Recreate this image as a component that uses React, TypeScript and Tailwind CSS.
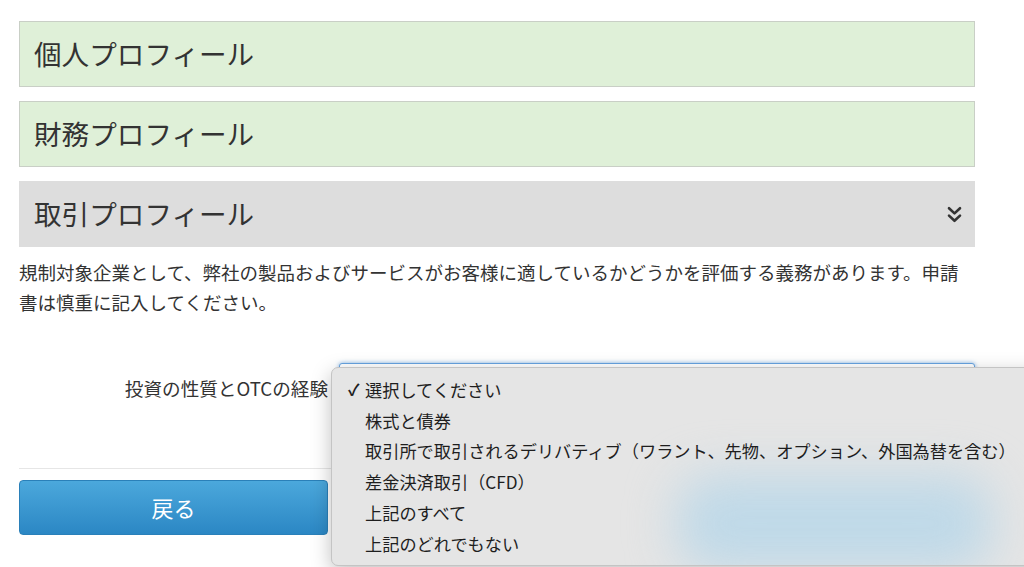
import React from "react";
import clsx from "clsx";

const Panel: React.FC<{ title: string; active?: boolean }> = ({
  title,
  active,
}) => (
  <div
    className={clsx(
      "h-[66px] flex items-center justify-between pl-[14px] pr-[12px] border",
      active
        ? "bg-[#dddddd] border-[#dddddd]"
        : "bg-[#dff0d8] border-[#c9cfc6]"
    )}
  >
    <h3 className="text-[27.6px] leading-none text-[#333] font-normal">
      {title}
    </h3>
    {active && (
      <svg width="15" height="17" viewBox="0 0 15 17" fill="none">
        <path
          d="M2 2.2 L7.5 7.4 L13 2.2 M2 9.6 L7.5 14.8 L13 9.6"
          stroke="#333"
          strokeWidth="2.6"
          strokeLinecap="round"
          strokeLinejoin="round"
        />
      </svg>
    )}
  </div>
);

const options = [
  "選択してください",
  "株式と債券",
  "取引所で取引されるデリバティブ（ワラント、先物、オプション、外国為替を含む）",
  "差金決済取引（CFD）",
  "上記のすべて",
  "上記のどれでもない",
];

export default function App() {
  return (
    <div className="relative w-[1024px] h-[567px] overflow-hidden bg-white font-['Noto_Sans_CJK_JP','Noto_Sans',sans-serif] text-[#333]">
      <div className="ml-[19px] w-[956px] pt-[21px]">
        <div className="flex flex-col gap-[14px]">
          <Panel title="個人プロフィール" />
          <Panel title="財務プロフィール" />
          <Panel title="取引プロフィール" active />
        </div>

        <p className="mt-[10px] text-[18.5px] leading-[30px] text-[#333]">
          規制対象企業として、弊社の製品およびサービスがお客様に適しているかどうかを評価する義務があります。申請書は慎重に記入してください。
        </p>

        <div className="mt-[46px] flex items-start">
          <label className="w-[309px] text-right pt-[10px] text-[18.6px] leading-[30px] text-[#333]">
            投資の性質とOTCの経験
          </label>
          <div className="ml-[11px] flex-1 h-[46px] rounded-[3px] border border-[#66a3e0] bg-white shadow-[0_0_4px_rgba(102,163,224,0.8)]" />
        </div>

        <hr className="mt-[59px] border-t border-[#e6e6e6]" />

        <div className="mt-[11px] flex justify-between">
          <button className="w-[309px] h-[55px] rounded-[4px] border border-[#2a80b9] bg-gradient-to-b from-[#4ba8dc] to-[#2b87c4] text-white text-[22px]">
            戻る
          </button>
          <button className="w-[309px] h-[55px] rounded-[4px] border border-[#2a80b9] bg-gradient-to-b from-[#4ba8dc] to-[#2b87c4] text-white text-[22px]">
            次へ
          </button>
        </div>
      </div>

      {/* open native select menu, the next button shows through it blurred */}
      <div className="absolute left-[331px] top-[367px] w-[720px] h-[199px] overflow-hidden rounded-[7px] border border-[#c4c4c4] bg-[#e5e5e5] shadow-[0_6px_20px_rgba(0,0,0,0.25)] pt-[6px]">
        <div className="absolute left-[345px] top-[108px] w-[315px] h-[95px] rounded-[36px] bg-[#bfd9e8] blur-[24px]" />
        <div className="relative">
          {options.map((opt, i) => (
            <div
              key={opt}
              className="h-[30.8px] flex items-center text-[17.2px] text-[#1e1e1e] leading-none"
            >
              <span className="w-[33px] pl-[16px] text-[16px] font-bold">
                {i === 0 ? "✓" : ""}
              </span>
              <span>{opt}</span>
            </div>
          ))}
        </div>
      </div>
    </div>
  );
}
